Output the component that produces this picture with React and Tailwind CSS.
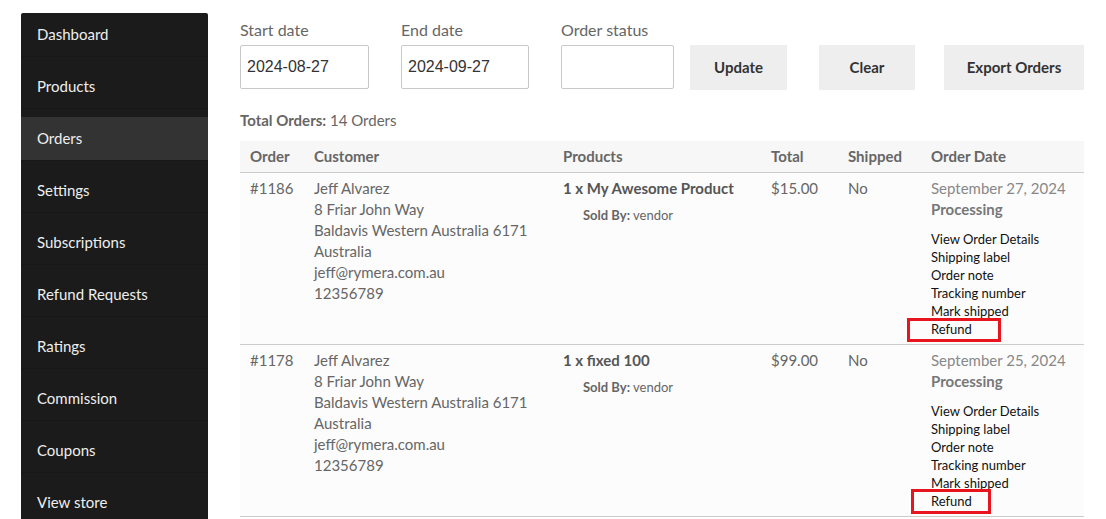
import React from "react";

const menu = [
  "Dashboard",
  "Products",
  "Orders",
  "Settings",
  "Subscriptions",
  "Refund Requests",
  "Ratings",
  "Commission",
  "Coupons",
  "View store",
];

const orders = [
  {
    id: "#1186",
    product: "1 x My Awesome Product",
    total: "$15.00",
    date: "September 27, 2024",
    box: "left-[-24px] w-[94px] top-[-2px] h-[24px]",
  },
  {
    id: "#1178",
    product: "1 x fixed 100",
    total: "$99.00",
    date: "September 25, 2024",
    box: "left-[-20px] w-[80px] top-[-3px] h-[25px]",
  },
];

const cols = "grid grid-cols-[64px_249px_208px_77px_83px_1fr]";

// 사이드바
const Sidebar = () => (
  <div className="w-[187px] shrink-0 bg-[#1b1b1b] mt-[13px] rounded-t-[2px]">
    {menu.map((m) => (
      <div key={m} className="h-[52px]">
        <div
          className={
            "h-[44px] flex items-center pl-4 text-[15px] text-[#eeeeee] border-b border-[#171717] " +
            (m === "Orders" ? "bg-[#333333]" : "")
          }
        >
          {m}
        </div>
      </div>
    ))}
  </div>
);

const Field = ({ label, value, w }) => (
  <div className="flex flex-col">
    <span className="text-[16px] text-[#666] leading-[20px] mt-[20px]">{label}</span>
    <div
      className={
        "mt-[5px] h-[44px] border border-[#c8c8c8] rounded-[2px] bg-white flex items-center px-[6px] text-[16px] text-[#333] font-['Liberation_Sans',sans-serif] " +
        w
      }
    >
      {value}
    </div>
  </div>
);

const Btn = ({ children, w }) => (
  <div className={"mt-[45px] h-[45px] bg-[#eeeeee] flex items-center justify-center text-[15px] font-bold text-[#333] " + w}>
    {children}
  </div>
);

const OrderRow = ({ o }) => (
  <div className={cols + " border-b border-[#cccccc] bg-[#fcfcfc] pt-[5px] pb-[6px] text-[15px] text-[#666] leading-[21px]"}>
    <div className="pl-[10px]">{o.id}</div>
    <div className="pl-[10px]">
      <div>Jeff Alvarez</div>
      <div>8 Friar John Way</div>
      <div>Baldavis Western Australia 6171</div>
      <div>Australia</div>
      <div>jeff@rymera.com.au</div>
      <div>12356789</div>
    </div>
    <div className="pl-[10px]">
      <div className="font-bold text-[#555]">{o.product}</div>
      <div className="pl-[20px] mt-[6px] text-[13px] text-[#666]">
        <span className="font-bold">Sold By:</span> vendor
      </div>
    </div>
    <div className="pl-[10px]">{o.total}</div>
    <div className="pl-[10px]">No</div>
    <div className="pl-[10px]">
      <div className="text-[#888]">{o.date}</div>
      <div className="font-bold text-[#777]">Processing</div>
      <div className="mt-[10px] text-[13px] leading-[18px] text-[#111]">
        <div>View Order Details</div>
        <div>Shipping label</div>
        <div>Order note</div>
        <div>Tracking number</div>
        <div>Mark shipped</div>
        <div className="relative">
          Refund
          <span className={"absolute border-[3px] border-[#e8141e] " + o.box}></span>
        </div>
      </div>
    </div>
  </div>
);

export default function App() {
  return (
    <div className="flex bg-white h-[519px] overflow-hidden pl-[21px] font-['Lato',sans-serif]">
      <Sidebar />
      <div className="ml-[32px] w-[844px]">
        <div className="flex">
          <Field label="Start date" value="2024-08-27" w="w-[129px]" />
          <div className="w-[32px]" />
          <Field label="End date" value="2024-09-27" w="w-[128px]" />
          <div className="w-[32px]" />
          <Field label="Order status" value="" w="w-[113px]" />
          <div className="w-[16px]" />
          <Btn w="w-[97px]">Update</Btn>
          <div className="w-[32px]" />
          <Btn w="w-[96px]">Clear</Btn>
          <div className="w-[29px]" />
          <Btn w="w-[140px]">Export Orders</Btn>
        </div>
        <div className="mt-[20px] text-[15px] text-[#666] leading-[20px]">
          <span className="font-bold">Total Orders:</span> 14 Orders
        </div>
        <div className="mt-[11px]">
          <div className={cols + " bg-[#f7f7f7] border-b border-[#cccccc] h-[32px] items-center text-[15px] font-bold text-[#666]"}>
            <div className="pl-[10px]">Order</div>
            <div className="pl-[10px]">Customer</div>
            <div className="pl-[10px]">Products</div>
            <div className="pl-[10px]">Total</div>
            <div className="pl-[10px]">Shipped</div>
            <div className="pl-[10px]">Order Date</div>
          </div>
          {orders.map((o) => (
            <OrderRow key={o.id} o={o} />
          ))}
        </div>
      </div>
    </div>
  );
}
